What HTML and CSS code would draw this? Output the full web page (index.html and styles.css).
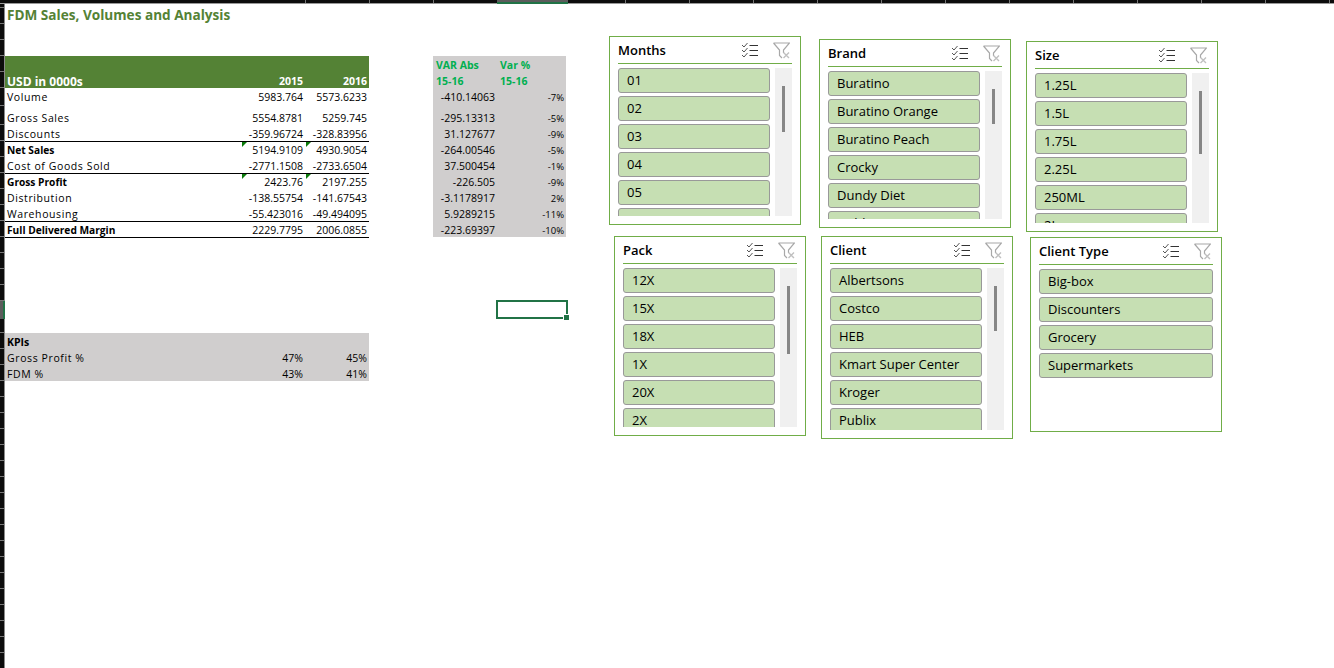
FILE: index.html
```html
<!doctype html>
<html lang="en">

<head>
    <title>FDM Sales, Volumes and Analysis</title>
    <link rel="stylesheet" href="styles.css">
</head>

<body>
    <svg class="defs" width="0" height="0">
        <symbol id="iconMulti" viewBox="0 0 17 16">
            <path d="M1 3l2 2 3.500-4M1 8l2 2 3.500-4M1 13l2 2 3.500-4" fill="none" stroke="#555" stroke-width="1" />
            <path d="M8.500 3.500H17M8.500 8.500H17M8.500 13.500H17" fill="none" stroke="#333" stroke-width="1" />
        </symbol>
        <symbol id="iconClear" viewBox="0 0 17 17">
            <path d="M.5 1H16.500L10.500 8V11M.5 1L6.500 8V13.500L9 16" fill="none" stroke="#a8a8a8" stroke-width="1.200" />
            <path d="M10.500 10.500l5.500 5.500M16 10.500l-5.500 5.500" fill="none" stroke="#c0c0c0" stroke-width="1.400" />
        </symbol>
    </svg>

    <div id="container">
        <div class="colStrip"></div>
        <div class="colSelected"></div>
        <div class="middle">
            <div class="rowStrip">
                <div class="rowsFirst"></div>
                <div class="rowsRest"></div>
                <div class="rowSelected"></div>
            </div>

            <main class="sheet">
                <h1 class="title">FDM Sales, Volumes and Analysis</h1>

                <div class="tables">
                    <section class="pnl">
                        <div class="row head"></div>
                        <div class="row head"><span>USD in 0000s</span><span>2015</span><span>2016</span></div>
                        <div class="row"><span>Volume</span><span>5983.764</span><span>5573.6233</span></div>
                        <div class="gap"></div>
                        <div class="row"><span>Gross Sales</span><span>5554.8781</span><span>5259.745</span></div>
                        <div class="row"><span>Discounts</span><span>-359.96724</span><span>-328.83956</span></div>
                        <div class="row total"><span>Net Sales</span><span class="flag">5194.9109</span><span class="flag">4930.9054</span></div>
                        <div class="row"><span>Cost of Goods Sold</span><span>-2771.1508</span><span>-2733.6504</span></div>
                        <div class="row total"><span>Gross Profit</span><span class="flag">2423.76</span><span class="flag">2197.255</span></div>
                        <div class="row"><span>Distribution</span><span>-138.55754</span><span>-141.67543</span></div>
                        <div class="row"><span>Warehousing</span><span>-55.423016</span><span>-49.494095</span></div>
                        <div class="row total last"><span>Full Delivered Margin</span><span>2229.7795</span><span>2006.0855</span></div>
                    </section>

                    <section class="variance">
                        <div class="row varHead"><span>VAR Abs</span><span>Var %</span></div>
                        <div class="row varHead"><span>15-16</span><span>15-16</span></div>
                        <div class="row"><span>-410.14063</span><span>-7%</span></div>
                        <div class="gap"></div>
                        <div class="row"><span>-295.13313</span><span>-5%</span></div>
                        <div class="row"><span>31.127677</span><span>-9%</span></div>
                        <div class="row"><span>-264.00546</span><span>-5%</span></div>
                        <div class="row"><span>37.500454</span><span>-1%</span></div>
                        <div class="row"><span>-226.505</span><span>-9%</span></div>
                        <div class="row"><span>-3.1178917</span><span>2%</span></div>
                        <div class="row"><span>5.9289215</span><span>-11%</span></div>
                        <div class="row"><span>-223.69397</span><span>-10%</span></div>
                    </section>
                </div>

                <section class="kpis">
                    <div class="row"><b>KPIs</b></div>
                    <div class="row"><span>Gross Profit %</span><span>47%</span><span>45%</span></div>
                    <div class="row"><span>FDM %</span><span>43%</span><span>41%</span></div>
                </section>
            </main>
        </div>

        <div class="activeCell"></div>

        <!-- slicers float over the sheet -->
        <section class="slicer months">
            <header><h2>Months</h2><svg class="multi"><use href="#iconMulti" /></svg><svg class="clear"><use href="#iconClear" /></svg></header>
            <div class="body">
                <ul>
                    <li>01</li><li>02</li><li>03</li><li>04</li><li>05</li><li>06</li>
                </ul>
                <div class="track"><div class="thumb"></div></div>
            </div>
        </section>

        <section class="slicer brand">
            <header><h2>Brand</h2><svg class="multi"><use href="#iconMulti" /></svg><svg class="clear"><use href="#iconClear" /></svg></header>
            <div class="body">
                <ul>
                    <li>Buratino</li><li>Buratino Orange</li><li>Buratino Peach</li><li>Crocky</li><li>Dundy Diet</li><li>Golden</li>
                </ul>
                <div class="track"><div class="thumb"></div></div>
            </div>
        </section>

        <section class="slicer size">
            <header><h2>Size</h2><svg class="multi"><use href="#iconMulti" /></svg><svg class="clear"><use href="#iconClear" /></svg></header>
            <div class="body">
                <ul>
                    <li>1.25L</li><li>1.5L</li><li>1.75L</li><li>2.25L</li><li>250ML</li><li>2L</li>
                </ul>
                <div class="track"><div class="thumb"></div></div>
            </div>
        </section>

        <section class="slicer pack">
            <header><h2>Pack</h2><svg class="multi"><use href="#iconMulti" /></svg><svg class="clear"><use href="#iconClear" /></svg></header>
            <div class="body">
                <ul>
                    <li>12X</li><li>15X</li><li>18X</li><li>1X</li><li>20X</li><li>2X</li>
                </ul>
                <div class="track"><div class="thumb"></div></div>
            </div>
        </section>

        <section class="slicer client">
            <header><h2>Client</h2><svg class="multi"><use href="#iconMulti" /></svg><svg class="clear"><use href="#iconClear" /></svg></header>
            <div class="body">
                <ul>
                    <li>Albertsons</li><li>Costco</li><li>HEB</li><li>Kmart Super Center</li><li>Kroger</li><li>Publix</li>
                </ul>
                <div class="track"><div class="thumb"></div></div>
            </div>
        </section>

        <section class="slicer clientType">
            <header><h2>Client Type</h2><svg class="multi"><use href="#iconMulti" /></svg><svg class="clear"><use href="#iconClear" /></svg></header>
            <div class="body">
                <ul>
                    <li>Big-box</li><li>Discounters</li><li>Grocery</li><li>Supermarkets</li>
                </ul>
            </div>
        </section>
    </div>
</body>

</html>
```

FILE: styles.css
```css
* {
    box-sizing: border-box;
}

body {
    margin: 0;
    background-color: white;
    font-family: "Open Sans", sans-serif;
    font-size: 10.5px;
    color: #000;
}

.defs {
    position: absolute;
}

#container {
    position: relative;
    width: 1334px;
    height: 668px;
    overflow: hidden;
}

/* spreadsheet headers, cropped to dark strips */
.colStrip {
    height: 4px;
    border-bottom: 1px solid #999;
    background-color: #0c0c0c;
    background-image: repeating-linear-gradient(to right, transparent 0 63px, #777 63px 64px);
    background-position: 242px 0;
    background-size: 1092px 100%;
    background-repeat: no-repeat;
}

.colSelected {
    position: absolute;
    left: 497px;
    top: 0;
    width: 71px;
    height: 4px;
    background-color: #5c5c5c;
    border-bottom: 2px solid #217346;
}

.middle {
    display: flex;
    height: 664px;
}

.rowStrip {
    position: relative;
    flex: 0 0 5px;
    display: flex;
    flex-direction: column;
    border-right: 1px solid #8a8a8a;
}

.rowsFirst {
    height: 101px;
    background: repeating-linear-gradient(#0c0c0c 0 15px, #777 15px 16px);
    background-position: 0 -12px;
}

.rowsRest {
    flex: 1;
    background: repeating-linear-gradient(#0c0c0c 0 15px, #777 15px 16px);
    background-position: 0 4px;
}

.rowSelected {
    position: absolute;
    left: 0;
    top: 297px;
    width: 5px;
    height: 18px;
    background-color: #5c5c5c;
    border-right: 2px solid #217346;
}

.sheet {
    flex: 1;
}

.title {
    margin: 0;
    height: 52px;
    padding: 2px 0 0 2px;
    font-size: 13.600px;
    line-height: 18px;
    font-weight: 700;
    color: #548235;
}

.tables {
    display: flex;
    align-items: flex-start;
    gap: 64px;
}

.row {
    height: 16px;
    line-height: 19px;
    white-space: nowrap;
}

.gap {
    height: 5px;
}

/* income statement */
.pnl,
.kpis {
    width: 364px;
}

.pnl .row,
.kpis .row {
    display: grid;
    grid-template-columns: 236px 64px 64px;
}

.pnl .row span:not(:first-child),
.kpis .row span:not(:first-child) {
    position: relative;
    padding-right: 2px;
    text-align: right;
}

.pnl .row span:first-child,
.kpis .row span:first-child,
.kpis b {
    padding-left: 2px;
    letter-spacing: 0.6px;
}

.kpis b {
    letter-spacing: 0;
}

.pnl .head {
    background-color: #548235;
    color: white;
    font-weight: 700;
}

.pnl .row.head span:first-child {
    font-size: 12px;
    letter-spacing: 0;
}

.total {
    border-top: 1px solid black;
    line-height: 17px;
}

.pnl .total span:first-child {
    font-size: 10.200px;
    font-weight: 700;
    letter-spacing: 0;
}

.total.last {
    height: 17px;
    border-bottom: 1px solid black;
}

.flag::before {
    content: "";
    position: absolute;
    left: 1px;
    top: 0;
    border-top: 5px solid #0b7a0b;
    border-right: 5px solid transparent;
}

/* variance block */
.variance {
    width: 133px;
    height: 181px;
    background-color: #d0cece;
}

.variance .row {
    display: grid;
    grid-template-columns: 64px 69px;
}

.variance .row span:first-child {
    padding-right: 2px;
    text-align: right;
}

.variance .row span:last-child {
    padding-right: 2px;
    font-size: 9.500px;
    text-align: right;
}

.variance .varHead {
    color: #00b050;
    font-weight: 700;
}

.variance .varHead span:first-child {
    padding-left: 3px;
    text-align: left;
}

.variance .varHead span:last-child {
    padding-left: 3px;
    font-size: 10.500px;
    text-align: left;
}

.kpis {
    margin-top: 95px;
    background-color: #d0cece;
}

/* selected cell */
.activeCell {
    position: absolute;
    left: 496px;
    top: 300px;
    width: 72px;
    height: 19px;
    border: 2px solid #217346;
}

.activeCell::after {
    content: "";
    position: absolute;
    right: -3px;
    bottom: -3px;
    box-sizing: content-box;
    width: 5px;
    height: 5px;
    background-color: #217346;
    border: solid white;
    border-width: 1px 0 0 1px;
}

/* slicers */
.slicer {
    position: absolute;
    width: 192px;
    display: flex;
    flex-direction: column;
    padding: 0 8px 8px 8px;
    border: 1px solid #70ad47;
    background-color: white;
    font-size: 13px;
}

.months { left: 609px; top: 36px; height: 189px; }
.brand { left: 819px; top: 39px; height: 189px; }
.size { left: 1026px; top: 41px; height: 191px; }
.pack { left: 614px; top: 236px; height: 200px; }
.client { left: 821px; top: 236px; height: 203px; }
.clientType { left: 1030px; top: 237px; height: 195px; }

.slicer header {
    flex: none;
    display: flex;
    align-items: center;
    height: 27px;
    padding-right: 2px;
    border-bottom: 1px solid #70ad47;
}

.slicer h2 {
    flex: 1;
    margin: 0;
    font-size: 13px;
    font-weight: 600;
    color: #000;
}

.slicer .multi {
    width: 17px;
    height: 16px;
    margin-right: 15px;
}

.slicer .clear {
    width: 17px;
    height: 17px;
}

.body {
    flex: 1;
    min-height: 0;
    display: flex;
    gap: 5px;
    margin-top: 4px;
}

.slicer ul {
    flex: 1;
    margin: 0;
    padding: 0;
    list-style: none;
    overflow: hidden;
}

.slicer li {
    height: 25px;
    margin-bottom: 3px;
    padding-left: 8px;
    line-height: 23px;
    border: 1px solid #999;
    border-radius: 3px;
    background-color: #c6dfb3;
}

.track {
    flex: 0 0 17px;
    display: flex;
    justify-content: center;
    background-color: #f0f0f0;
}

.thumb {
    width: 3px;
    background-color: #868686;
}

.months .thumb { height: 46px; margin-top: 18px; }
.brand .thumb { height: 35px; margin-top: 18px; }
.size .thumb { height: 63px; margin-top: 18px; }
.pack .thumb { height: 68px; margin-top: 18px; }
.client .thumb { height: 45px; margin-top: 18px; }
```
